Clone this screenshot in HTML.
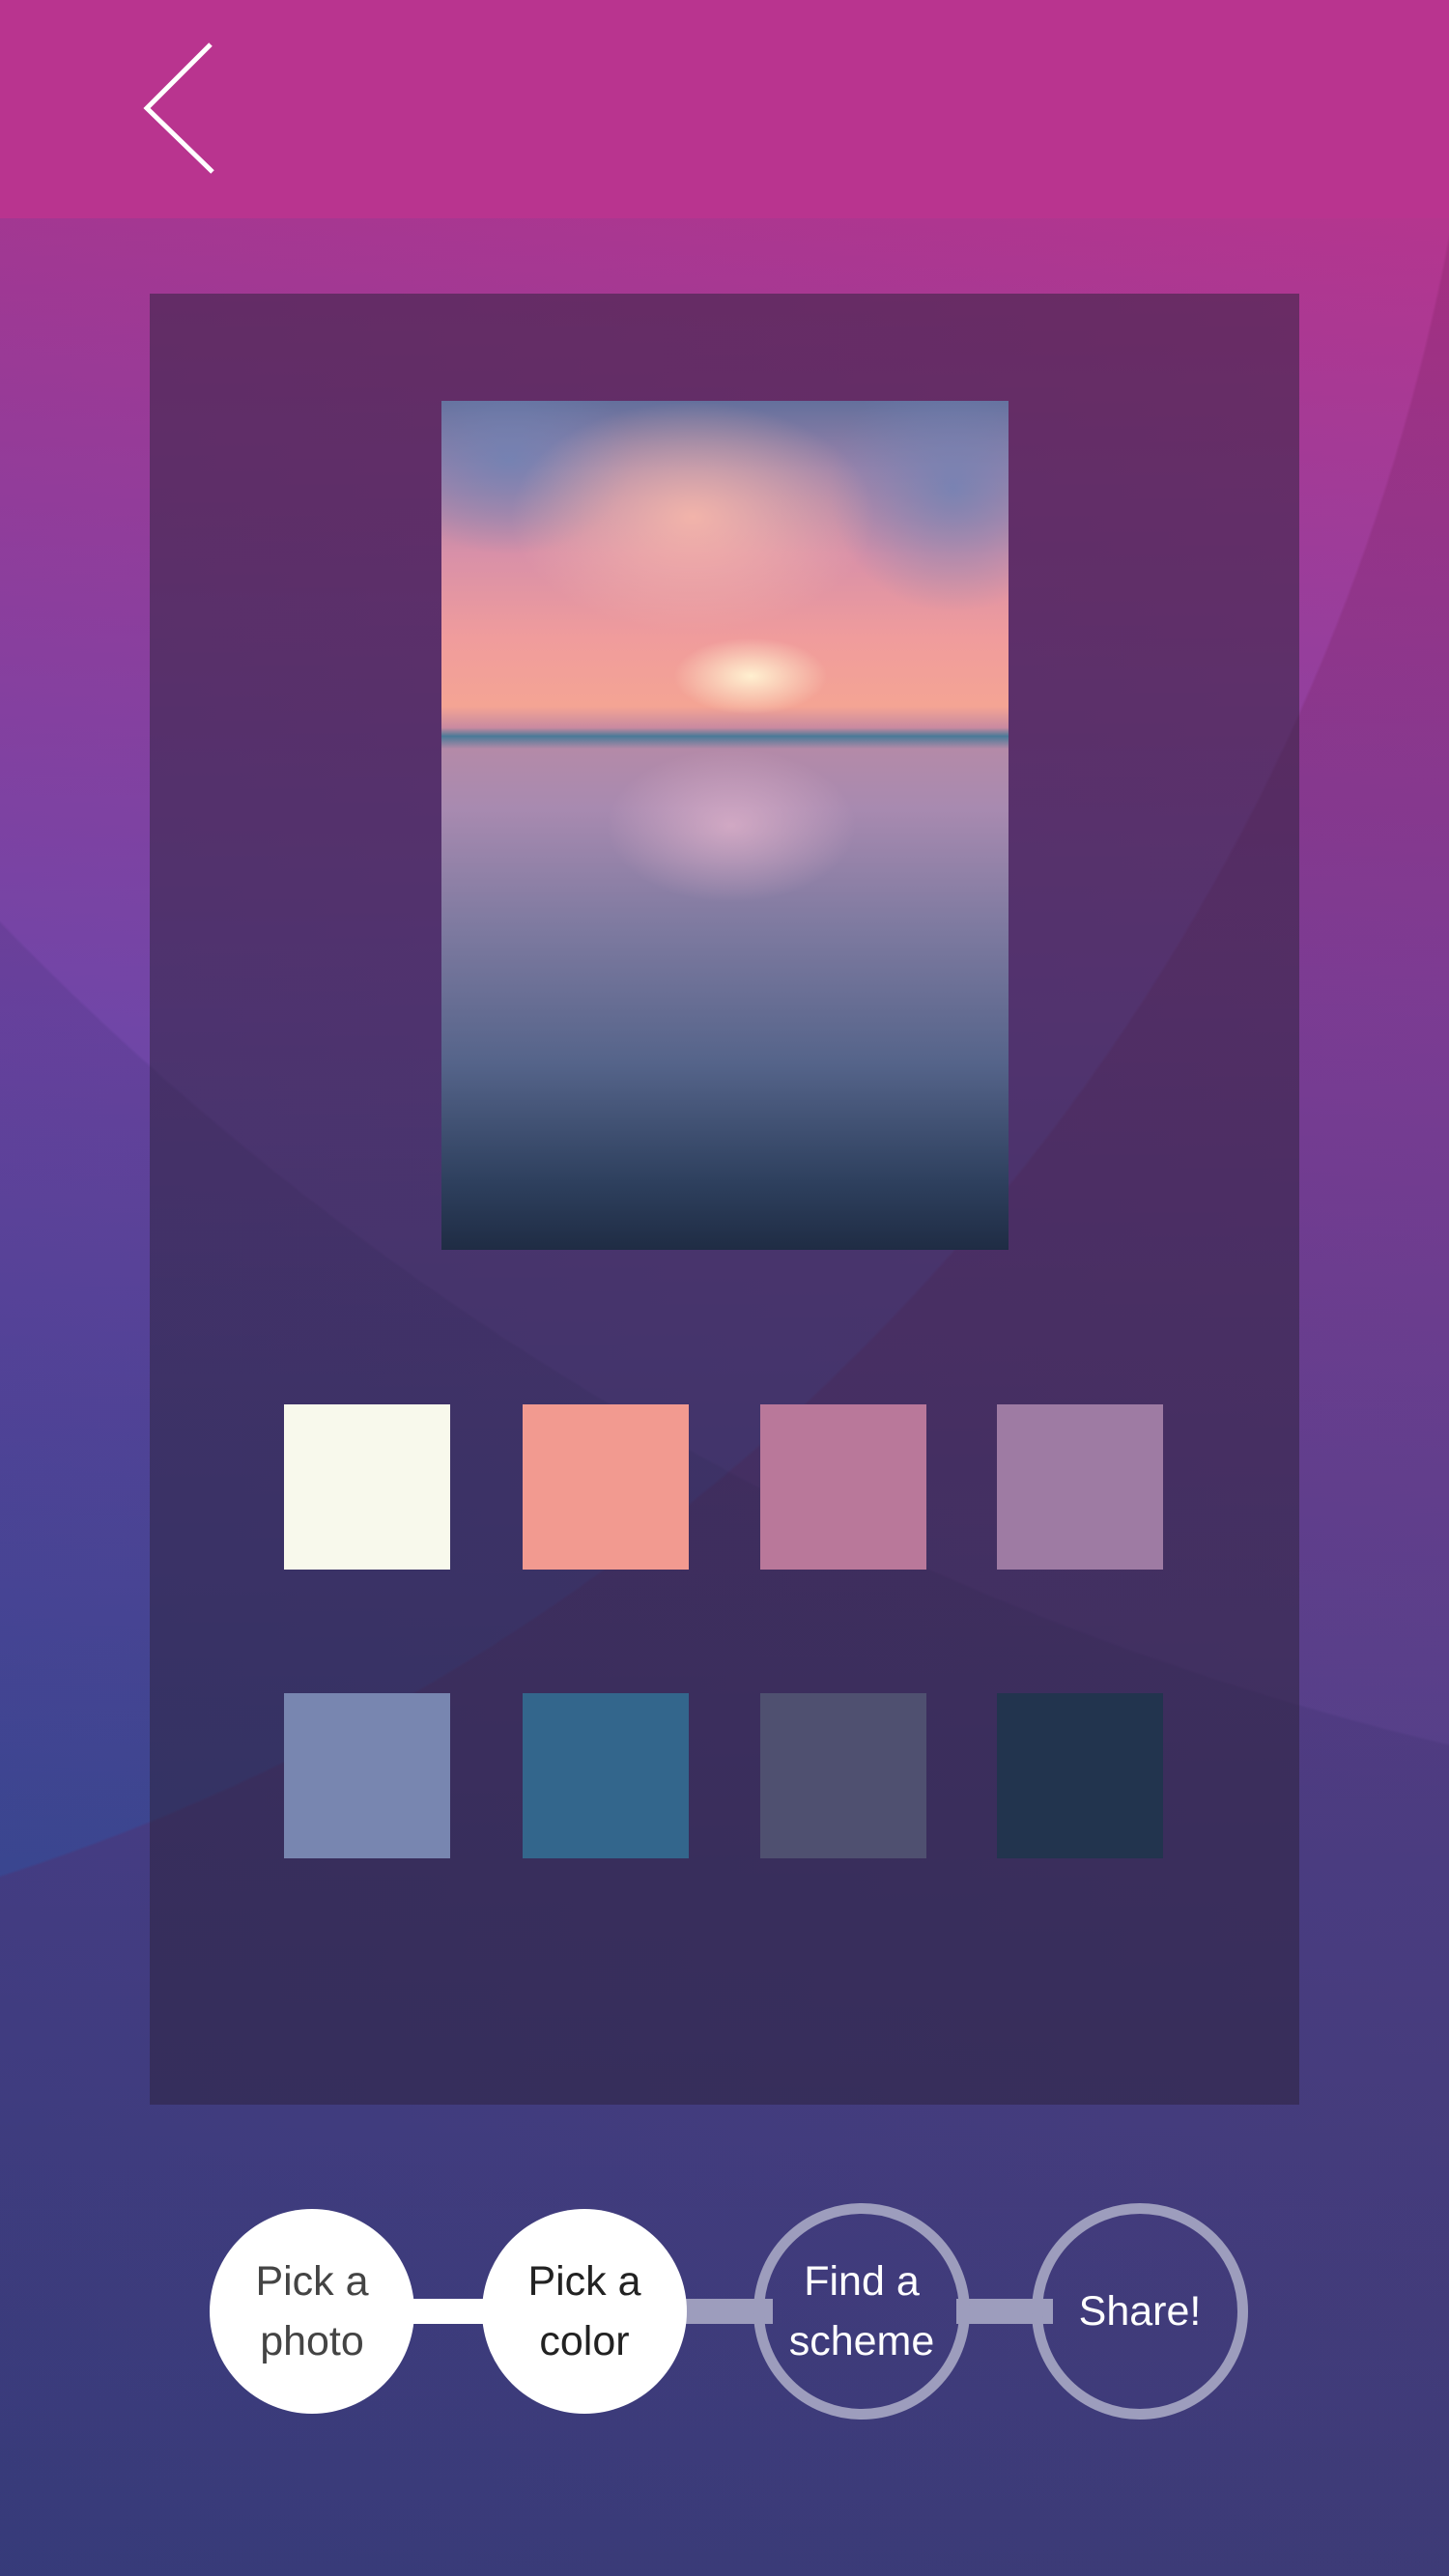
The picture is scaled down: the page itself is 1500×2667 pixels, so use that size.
<!DOCTYPE html>
<html><head><meta charset="utf-8"><style>
html,body{margin:0;padding:0;width:1500px;height:2667px;overflow:hidden;}
#root{width:1500px;height:2667px;position:relative;overflow:hidden;font-family:"Liberation Sans",sans-serif;
background:
radial-gradient(circle 3080px at 2210px -1190px, rgba(0,0,0,0) 3078px, rgba(30,30,80,0.13) 3081px),
radial-gradient(circle 2220px at -680px -170px, rgba(0,0,0,0) 2218px, rgba(110,25,80,0.22) 2221px),
linear-gradient(90deg, rgba(40,60,160,0.12), rgba(200,40,120,0.06)),
linear-gradient(180deg,#b5368f 200px,#9a3e9c 600px,#7a47a8 1050px,#5a4aa0 1500px,#404e98 1950px,#2c4c8a 2667px);}
.hdr{position:absolute;left:0;top:0;width:1500px;height:226px;background:#b9348f;}
.panel{position:absolute;left:155px;top:304px;width:1190px;height:1875px;background:rgba(45,35,60,0.52);}
.photo{position:absolute;left:457px;top:415px;width:587px;height:879px;overflow:hidden;}
.sw{position:absolute;width:172px;height:171px;}
.c{position:absolute;border-radius:50%;box-sizing:border-box;display:flex;align-items:center;justify-content:center;text-align:center;font-size:43px;line-height:62px;}
.w{background:#fff;color:#333;width:212px;height:212px;}
.o{border:11px solid #9d9dbd;color:#fff;width:224px;height:224px;}
.bar{position:absolute;height:26px;}
.g{position:absolute;border-radius:50%;}
</style></head><body><div id="root">
<div class="hdr"></div>
<svg style="position:absolute;left:140px;top:40px" width="90" height="145"><polyline points="78,6 12,72 80,138" fill="none" stroke="#fff" stroke-width="5"/></svg>
<div class="panel"></div>
<div class="photo">
<div style="position:absolute;left:0;top:0;width:587px;height:879px;background:linear-gradient(180deg,#64709c 0%,#9a82aa 8%,#d890a8 18%,#f09c9c 28%,#f4a494 36%,#c98aa0 38.5%,#4a7a98 39.5%,#b48aa8 41%,#a88ab0 48%,#7e7aa0 62%,#55648a 78%,#2e405e 92%,#1f2c44 100%)"></div>
<div class="g" style="left:-60px;top:-40px;width:260px;height:200px;background:radial-gradient(rgba(110,130,180,.8),rgba(110,130,180,0) 70%)"></div>
<div class="g" style="left:400px;top:-40px;width:260px;height:260px;background:radial-gradient(rgba(110,130,180,.8),rgba(110,130,180,0) 70%)"></div>
<div class="g" style="left:70px;top:0px;width:380px;height:240px;background:radial-gradient(rgba(255,190,170,.8),rgba(255,170,160,0) 70%)"></div>
<div class="g" style="left:240px;top:245px;width:160px;height:80px;background:radial-gradient(#fff0d0,rgba(255,210,180,0) 70%)"></div>
<div class="g" style="left:170px;top:360px;width:260px;height:160px;background:radial-gradient(rgba(240,190,210,.6),rgba(240,190,210,0) 70%)"></div>
</div>
<div class="sw" style="left:294px;top:1454px;background:#f8f9ec"></div>
<div class="sw" style="left:541px;top:1454px;background:#f29a90"></div>
<div class="sw" style="left:787px;top:1454px;background:#b9789a"></div>
<div class="sw" style="left:1032px;top:1454px;background:#9e7ba3"></div>
<div class="sw" style="left:294px;top:1753px;background:#7886b0"></div>
<div class="sw" style="left:541px;top:1753px;background:#33668c"></div>
<div class="sw" style="left:787px;top:1753px;background:#4f5070"></div>
<div class="sw" style="left:1032px;top:1753px;background:#22344e"></div>
<div class="bar" style="left:420px;top:2380px;width:100px;background:#fff"></div>
<div class="bar" style="left:700px;top:2380px;width:100px;background:#9d9dbd"></div>
<div class="bar" style="left:990px;top:2380px;width:100px;background:#9d9dbd"></div>
<div class="c w" style="left:217px;top:2287px;color:#444">Pick a<br>photo</div>
<div class="c w" style="left:499px;top:2287px;color:#222">Pick a<br>color</div>
<div class="c o" style="left:780px;top:2281px">Find a<br>scheme</div>
<div class="c o" style="left:1068px;top:2281px">Share!</div>
</div></body></html>
